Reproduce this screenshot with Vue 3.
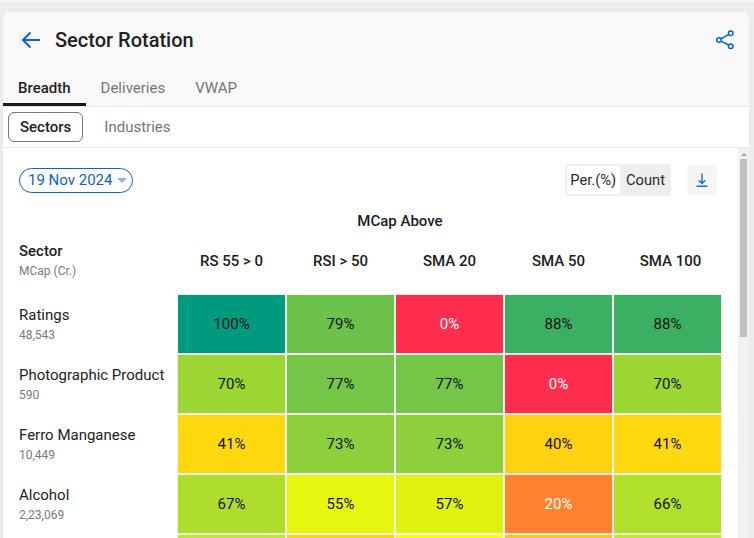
<script setup>
const columns = ['RS 55 > 0', 'RSI > 50', 'SMA 20', 'SMA 50', 'SMA 100']
const rows = [
  { name: 'Ratings', mcap: '48,543', cells: [['100%', '#009a7e'], ['79%', '#6cc24a'], ['0%', '#ff2e4c', 1], ['88%', '#3cb062'], ['88%', '#3cb062']] },
  { name: 'Photographic Product', mcap: '590', cells: [['70%', '#9bd633'], ['77%', '#75c648'], ['77%', '#75c648'], ['0%', '#ff2e4c', 1], ['70%', '#9bd633']] },
  { name: 'Ferro Manganese', mcap: '10,449', cells: [['41%', '#ffd90f'], ['73%', '#8dd03c'], ['73%', '#8dd03c'], ['40%', '#ffd211'], ['41%', '#ffd90f']] },
  { name: 'Alcohol', mcap: '2,23,069', cells: [['67%', '#aede2b'], ['55%', '#e6f60f'], ['57%', '#dff30f'], ['20%', '#ff832e', 1], ['66%', '#b0e029']] },
  { name: '', mcap: '', cells: [['', '#bfe82a'], ['', '#ffd214'], ['', '#ffff00'], ['', '#ffc61a'], ['', '#c4ea20']] },
]
</script>

<template>
  <div class="page">
    <div class="topstrip"></div>
    <div class="card">
      <header class="head">
        <div class="title-row">
          <div class="title-left">
            <svg class="back" width="20" height="18" viewBox="0 0 20 18" fill="none" stroke="#0f5fd7" stroke-width="2">
              <path d="M19 9H2.5M9.5 1.5 2 9l7.5 7.5" />
            </svg>
            <h1>Sector Rotation</h1>
          </div>
          <svg class="share" width="20" height="20" viewBox="0 0 20 20" fill="none" stroke="#0f5fd7" stroke-width="1.5">
            <circle cx="15.7" cy="3.2" r="2.3" />
            <circle cx="4" cy="10" r="2.3" />
            <circle cx="15.7" cy="16.2" r="2.3" />
            <path d="M6 8.8 13.7 4.4M6 11.2l7.7 3.8" />
          </svg>
        </div>
        <nav class="tabs">
          <span class="tab active">Breadth</span>
          <span class="tab">Deliveries</span>
          <span class="tab">VWAP</span>
        </nav>
      </header>
      <div class="subtabs">
        <span class="pill active">Sectors</span>
        <span class="pill">Industries</span>
      </div>
      <div class="body">
        <div class="content">
          <div class="toolbar">
            <div class="date">19 Nov 2024<i class="caret"></i></div>
            <div class="tools">
              <div class="toggle">
                <span class="opt on">Per.(%)</span>
                <span class="opt">Count</span>
              </div>
              <button class="dl" type="button">
                <svg width="12" height="14" viewBox="0 0 12 14" fill="none" stroke="#1c69dc" stroke-width="1.4">
                  <path d="M6 .5v9.5M2.8 7.2 6 10.4l3.2-3.2M.5 13.2h11" />
                </svg>
              </button>
            </div>
          </div>
          <div class="group-title">MCap Above</div>
          <div class="grid">
            <div class="corner">
              <div class="name strong">Sector</div>
              <div class="mcap">MCap (Cr.)</div>
            </div>
            <div v-for="c in columns" :key="c" class="col-head">{{ c }}</div>
            <template v-for="(r, ri) in rows" :key="ri">
              <div class="sector">
                <div class="name">{{ r.name }}</div>
                <div class="mcap">{{ r.mcap }}</div>
              </div>
              <div
                v-for="(cell, i) in r.cells"
                :key="i"
                class="cell"
                :class="{ light: cell[2] }"
                :style="{ backgroundColor: cell[1] }"
              >{{ cell[0] }}</div>
            </template>
          </div>
        </div>
        <div class="scrollbar">
          <i class="arrow"></i>
          <div class="thumb"></div>
        </div>
      </div>
    </div>
  </div>
</template>

<style>
html, body { margin: 0; overflow: hidden; background: #ececec; }
</style>

<style scoped>
.page {
  width: 754px;
  height: 538px;
  overflow: hidden;
  background: #ececec;
  font-family: Roboto, sans-serif;
  box-sizing: border-box;
  color: #1c1c1c;
}
.topstrip { height: 2px; background: #f3f3f3; }
.card {
  margin: 10px 5px 0 3px;
  height: 526px;
  background: #fff;
  border-radius: 8px 8px 0 0;
  overflow: hidden;
}
.head {
  background: #f9f9f9;
  border-bottom: 1px solid #e6e6e6;
  height: 94px;
  display: flex;
  flex-direction: column;
  justify-content: space-between;
}
.title-row {
  display: flex;
  justify-content: space-between;
  align-items: center;
  padding: 16px 14px 0 18px;
}
.title-left { display: flex; align-items: center; gap: 14px; }
h1 { margin: 0; font-size: 20px; font-weight: 500; line-height: 24px; color: #1f1f1f; }
.tabs { display: flex; }
.tab {
  padding: 0 15px;
  height: 29px;
  line-height: 22px;
  font-size: 15px;
  color: #757575;
  box-sizing: border-box;
}
.tab.active {
  color: #222;
  font-weight: 500;
  border-bottom: 3px solid #1c1c1c;
}
.subtabs {
  display: flex;
  align-items: center;
  gap: 9px;
  height: 40px;
  padding: 0 5px;
  border-bottom: 1px solid #e9e9e9;
}
.pill {
  height: 30px;
  line-height: 29px;
  padding: 0 11px;
  font-size: 15px;
  color: #757575;
  border: 1px solid transparent;
  border-radius: 6px;
  box-sizing: border-box;
}
.pill.active { color: #222; font-weight: 500; border-color: #777; }
.body { display: flex; height: 390px; }
.content { flex: 1; padding: 0 16px; min-width: 0; }
.toolbar {
  display: flex;
  justify-content: space-between;
  align-items: center;
  height: 32px;
  margin-top: 16px;
  padding-right: 5px;
}
.date {
  display: flex;
  align-items: center;
  height: 25px;
  padding: 0 5px 0 8px;
  border: 1px solid #0f5fd7;
  border-radius: 13px;
  font-size: 15px;
  color: #0f5fd7;
  box-sizing: border-box;
}
.caret {
  margin-left: 5px;
  border-left: 5px solid transparent;
  border-right: 5px solid transparent;
  border-top: 5px solid #8fb3ec;
}
.tools { display: flex; align-items: center; gap: 16px; }
.toggle {
  display: flex;
  padding: 2px;
  background: #eeeeee;
  border-radius: 4px;
  font-size: 14.7px;
}
.opt { height: 28px; line-height: 28px; padding: 0 3.5px; color: #2a2a2a; }
.opt.on { background: #fff; border-radius: 3px; }
.opt:last-child { padding: 0 4px 0 6.5px; }
.dl {
  width: 30px;
  height: 30px;
  padding: 0;
  border: 0;
  border-radius: 5px;
  background: #f5f5f5;
  display: flex;
  align-items: center;
  justify-content: center;
}
.group-title {
  margin-top: 16px;
  padding-left: 59px;
  text-align: center;
  font-size: 15px;
  font-weight: 500;
  line-height: 18px;
  color: #1c1c1c;
}
.grid {
  margin-top: 5px;
  display: grid;
  grid-template-columns: 157px repeat(5, 107px);
  grid-template-rows: 58px;
  grid-auto-rows: 58px;
  gap: 2px;
}
.corner, .sector {
  display: flex;
  flex-direction: column;
  justify-content: center;
}
.sector { padding-top: 1px; }
.corner { padding-bottom: 6px; }
.name { font-size: 15px; line-height: 20px; color: #222; white-space: nowrap; }
.name.strong { font-weight: 500; }
.mcap { font-size: 12px; line-height: 20px; color: #7a7a7a; }
.col-head {
  display: flex;
  align-items: center;
  justify-content: center;
  padding-bottom: 6px;
  font-size: 15px;
  font-weight: 500;
  color: #1c1c1c;
}
.col-head:nth-child(6) { padding-left: 6px; }
.cell {
  display: flex;
  align-items: center;
  justify-content: center;
  font-size: 15px;
  color: #111;
  box-shadow: 0 0 0 1px #eeeeee;
}
.cell.light { color: #fff; }
.scrollbar {
  position: relative;
  width: 11px;
  background: #f1f1f1;
  flex: none;
}
.arrow {
  position: absolute;
  left: 3px;
  top: 5px;
  border-left: 3px solid transparent;
  border-right: 3px solid transparent;
  border-bottom: 3px solid #a3a3a3;
}
.thumb {
  position: absolute;
  left: 2px;
  right: 2px;
  top: 11px;
  height: 178px;
  background: #c0c0c0;
}
</style>
